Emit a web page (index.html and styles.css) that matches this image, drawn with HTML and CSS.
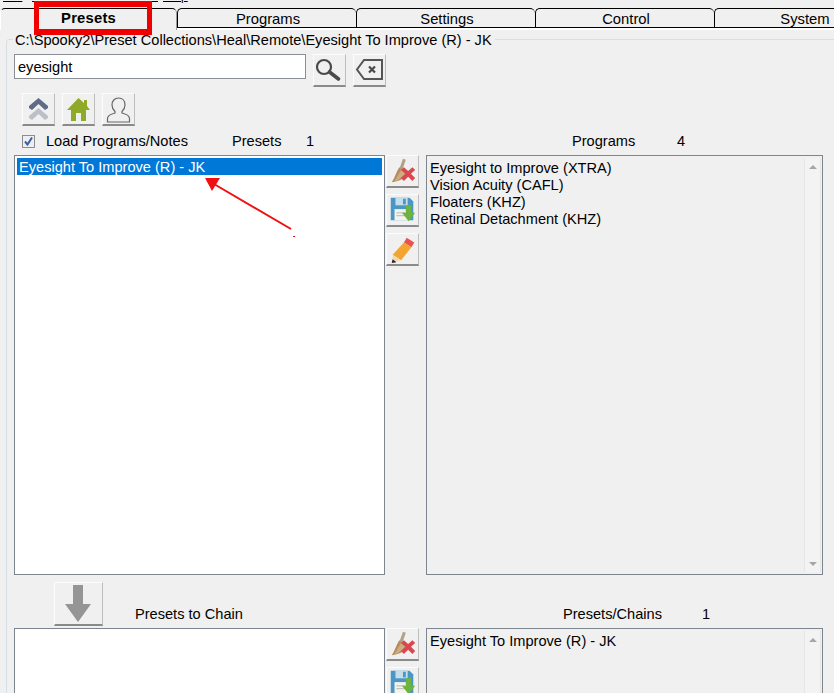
FILE: index.html
```html
<!DOCTYPE html>
<html lang="en">
<head>
  <meta charset="UTF-8" />
  <meta name="viewport" content="width=device-width, initial-scale=1.0" />
  <title>Spooky2 Presets</title>
  <link rel="stylesheet" href="styles.css">
</head>
<body>
  <svg class="defs" width="0" height="0">
    <symbol id="broom" viewBox="0 0 33 33">
      <path d="M17 3l3 1-4 12-3-2z" fill="#b3a087"/>
      <path d="M13 12l10 8c-4 4-10 7-18 8 3-4 5-11 8-16z" fill="#b58d5f"/>
      <path d="M15 15l5 4-9 7-3 1z" fill="#cdae82"/>
      <path d="M15 15l3-3 4.500 4 4.500-4 3 3-4.500 4 4.500 4.500-3 3-4.500-4.500-4.500 4.500-3-3 4.500-4.500z" fill="#d9484e"/>
    </symbol>
    <symbol id="floppy" viewBox="0 0 33 33">
      <path d="M4 3h20l4 4v20H4z" fill="#4a96c4"/>
      <path d="M9 3h13v8H9z" fill="#c4deeb"/>
      <path d="M17 4h3v6h-3z" fill="#4a96c4"/>
      <path d="M8 15h15v12H8z" fill="#f3f3ee"/>
      <path d="M10 19h9M10 22h9" stroke="#b5b5b0"/>
      <path d="M20 11h6v8h4l-7 9-7-9h4z" fill="#6db33f"/>
    </symbol>
    <symbol id="pencil" viewBox="0 0 33 33">
      <path d="M21 4l8 5-3 5-8-5z" fill="#e8534f"/>
      <path d="M18 9l8 5-11 14-9-6z" fill="#f2a531"/>
      <path d="M6 22l9 6-9 3z" fill="#f0d9b0"/>
      <path d="M6 27l4 3-5 1z" fill="#222"/>
    </symbol>
  </svg>

  <div class="app">
    <div class="menu">
      <span class="m1">File</span><span class="m2">Simulation</span><span class="m3">Mode</span><span class="m4">Tools</span><span class="m5">Help</span>
    </div>

    <div class="tabs">
      <div class="tab tab-active">Presets</div>
      <div class="tab">Programs</div>
      <div class="tab">Settings</div>
      <div class="tab">Control</div>
      <div class="tab">System</div>
    </div>

    <fieldset class="group">
      <legend>C:\Spooky2\Preset Collections\Heal\Remote\Eyesight To Improve (R) - JK</legend>

      <div class="search-row">
        <div class="search-box">eyesight</div>
        <button class="btn">
          <svg width="31" height="31" viewBox="0 0 31 31"><circle cx="10" cy="12" r="7" fill="none" stroke="#4a4a4a" stroke-width="2.200"/><path d="M15.500 17l9 7" stroke="#4a4a4a" stroke-width="3.600" stroke-linecap="round"/></svg>
        </button>
        <button class="btn">
          <svg width="31" height="31" viewBox="0 0 31 31"><path d="M3 14.500L10 5h18v19H10z" fill="none" stroke="#555" stroke-width="2"/><path d="M15 11.500l6 6M21 11.500l-6 6" stroke="#4a4a4a" stroke-width="2.200"/></svg>
        </button>
      </div>

      <div class="nav-row">
        <button class="btn">
          <svg width="31" height="31" viewBox="0 0 31 31"><path d="M6 12l9.500-8L25 12v2l-3 2-6.500-6L9 16l-3-2z" fill="#5f6c85"/><path d="M6 22l9.500-8L25 22v2l-3 2-6.500-6L9 26l-3-2z" fill="#bcbfc6"/></svg>
        </button>
        <button class="btn">
          <svg width="31" height="31" viewBox="0 0 31 31"><path d="M15.500 4L21 9V6h3v6l3 4h-4v11h-5v-8h-5v8H8V16H4z" fill="#8fa928"/></svg>
        </button>
        <button class="btn">
          <svg width="31" height="31" viewBox="0 0 31 31"><path d="M15.500 4c4 0 6.500 3 6.500 7 0 3-1.500 5-3 6.500v1.500c4 1 7.500 2.500 7.500 5.500V28H4.500v-3.500c0-3 3.500-4.500 7.500-5.500v-1.500c-1.500-1.500-3-3.500-3-6.500 0-4 2.500-7 6.500-7z" fill="none" stroke="#666" stroke-width="1.200"/></svg>
        </button>
      </div>

      <div class="main-grid">
        <div class="head-left">
          <span class="check"><svg width="11" height="11" viewBox="0 0 11 11"><path d="M2 5.500l2.500 3L9 1.500" fill="none" stroke="#3d5f9e" stroke-width="2"/></svg></span>
          <span class="load-label">Load Programs/Notes</span>
          <span class="presets-label">Presets</span>
          <span class="presets-count">1</span>
        </div>
        <div></div>
        <div class="head-right">
          <span class="programs-label">Programs</span>
          <span class="programs-count">4</span>
        </div>

        <div class="list list-white">
          <div class="row row-selected">Eyesight To Improve (R) - JK</div>
        </div>
        <div class="side-btns">
          <button class="btn"><svg width="31" height="31"><use href="#broom"/></svg></button>
          <button class="btn"><svg width="31" height="31"><use href="#floppy"/></svg></button>
          <button class="btn"><svg width="31" height="31"><use href="#pencil"/></svg></button>
        </div>
        <div class="list list-grey">
          <div class="rows">
            <div class="row">Eyesight to Improve (XTRA)</div>
            <div class="row">Vision Acuity (CAFL)</div>
            <div class="row">Floaters (KHZ)</div>
            <div class="row">Retinal Detachment (KHZ)</div>
          </div>
          <div class="scrollbar"><span class="arrow-up"></span><span class="arrow-down"></span></div>
        </div>
      </div>

      <div class="chain-grid">
        <div class="chain-head-left">
          <button class="btn btn-down">
            <svg width="47" height="41" viewBox="0 0 47 41"><path d="M18 2h10v19h8L23 39 10 21h8z" fill="#959595"/></svg>
          </button>
          <span class="chain-label">Presets to Chain</span>
        </div>
        <div></div>
        <div class="head-right chain-head-right">
          <span class="chains-label">Presets/Chains</span>
          <span class="chains-count">1</span>
        </div>

        <div class="list list-white list-bottom"></div>
        <div class="side-btns">
          <button class="btn"><svg width="31" height="31"><use href="#broom"/></svg></button>
          <button class="btn"><svg width="31" height="31"><use href="#floppy"/></svg></button>
        </div>
        <div class="list list-grey list-bottom">
          <div class="rows">
            <div class="row">Eyesight To Improve (R) - JK</div>
          </div>
          <div class="scrollbar"><span class="arrow-up"></span></div>
        </div>
      </div>
    </fieldset>

    <!-- annotations on top of the screenshot -->
    <div class="red-box"></div>
    <svg class="red-arrow" width="834" height="693" viewBox="0 0 834 693">
      <path d="M291 229L214 184" stroke="#f01010" stroke-width="2"/>
      <path d="M205 178h15l-8 13z" fill="#f01010"/>
      <rect x="293" y="236" width="2" height="1" fill="#f01010"/>
    </svg>
  </div>
</body>
</html>
```
FILE: styles.css
```css
* {
  box-sizing: border-box;
}
html, body {
  margin: 0;
  padding: 0;
}
body {
  font-family: "Liberation Sans", Arial, sans-serif;
  font-size: 14.6px;
  color: #000;
  background: #f0f0f0;
  overflow: hidden;
}
.defs {
  display: block;
}
.app {
  position: relative;
  width: 834px;
  height: 693px;
  overflow: hidden;
}

/* menu is cut off by the top of the crop */
.menu {
  display: flex;
  height: 8px;
  overflow: hidden;
  font-size: 12px;
}
.menu span {
  display: block;
  height: 14px;
  margin-top: -11px;
  line-height: 14px;
  text-decoration: underline;
}
.m1 { margin-left: 3px; width: 29px; }
.m2 { width: 58px; }
.m3 { width: 40px; }
.m4 { width: 33px; }

.tabs {
  display: flex;
  width: 900px;
  height: 22px;
  border-bottom: 2px solid #fff;
}
.tab {
  width: 179px;
  height: 20px;
  padding-left: 2px;
  line-height: 20px;
  font-size: 14.8px;
  text-align: center;
  background: #f0f0f0;
  border-top: 1px solid #000;
  border-bottom: 1px solid #000;
  border-left: 1px solid #000;
  border-top-left-radius: 5px;
  border-top-right-radius: 5px;
}
.tab-active {
  width: 177px;
  height: 22px;
  padding-left: 0;
  line-height: 18px;
  font-weight: bold;
  letter-spacing: .2px;
  border: 0;
  border-top: 1px solid #000;
  border-left: 1px solid #fff;
  border-right: 1px solid #999;
}

.group {
  margin: 1px 0 0 6px;
  padding: 0 0 0 7px;
  width: 840px;
  height: 700px;
  border: 1px solid #d5dfe5;
  border-radius: 3px;
  min-width: 0;
}
.group legend {
  margin-left: -1px;
  padding: 0 3px 0 2px;
  height: 17px;
  line-height: 19px;
}

.btn {
  display: flex;
  align-items: center;
  justify-content: center;
  width: 33px;
  height: 33px;
  padding: 0;
  background: #f0f0f0;
  border: 1px solid #fcfcfc;
  border-right-color: #bdbdbd;
  border-bottom: 2px solid #8a8a8a;
  flex: none;
}
.btn svg {
  display: block;
}

.search-row {
  display: flex;
  margin-top: 6px;
  height: 33px;
}
.search-box {
  width: 292px;
  height: 25px;
  padding-left: 3px;
  line-height: 25px;
  background: #fff;
  border: 1px solid #8a8f96;
  margin-right: 7px;
}
.search-row .btn + .btn {
  margin-left: 7px;
}

.nav-row {
  display: flex;
  gap: 7px;
  margin: 6px 0 0 8px;
  height: 34px;
}

.main-grid, .chain-grid {
  display: grid;
  grid-template-columns: 371px 34px 398px;
}
.main-grid {
  margin-top: 2px;
  grid-template-rows: 26px 420px;
}
.chain-grid {
  margin-top: 7px;
  grid-template-rows: 46px 100px;
}

.head-left, .head-right {
  display: flex;
  align-items: center;
  height: 24px;
}
.check {
  display: flex;
  align-items: center;
  justify-content: center;
  width: 13px;
  height: 13px;
  margin-left: 8px;
  background: #eceef3;
  border: 1px solid #8d8d8d;
}
.load-label { margin-left: 11px; width: 186px; }
.presets-label { width: 74px; }
.head-right { margin-left: 7px; }
.programs-label { margin-left: 146px; width: 105px; }

.list {
  border: 1px solid #7d858e;
}
.list-white {
  background: #fff;
  padding: 2px;
}
.list-grey {
  display: flex;
  margin-left: 7px;
  background: #f0f0f0;
  width: 397px;
}
.rows {
  flex: 1;
  padding: 4px 0 0 3px;
}
.row {
  height: 17px;
  line-height: 17px;
}
.row-selected {
  background: #0078d7;
  color: #fff;
  padding-left: 2px;
  line-height: 19px;
}
.scrollbar {
  position: relative;
  width: 17px;
  margin: 2px 1px 2px 0;
  background: #f3f3f3;
  border-left: 1px solid #e6e6e6;
  border-right: 1px solid #e6e6e6;
}
.arrow-up, .arrow-down {
  position: absolute;
  left: 4px;
  width: 0;
  height: 0;
  border-left: 4px solid transparent;
  border-right: 4px solid transparent;
}
.arrow-up {
  top: 7px;
  border-bottom: 4px solid #a6a6a6;
}
.arrow-down {
  bottom: 6px;
  border-top: 4px solid #a6a6a6;
}

.side-btns {
  display: flex;
  flex-direction: column;
  gap: 6px;
  margin-left: 1px;
}

.chain-head-left {
  display: flex;
  align-items: flex-end;
}
.btn-down {
  width: 49px;
  height: 44px;
  margin-left: 40px;
  align-self: flex-start;
}
.chain-label {
  margin-left: 32px;
  padding-bottom: 4px;
  line-height: 20px;
}
.chain-head-right {
  height: 46px;
  align-items: flex-end;
}
.chain-head-right span {
  padding-bottom: 4px;
  line-height: 20px;
}
.chains-label { margin-left: 137px; width: 139px; }
.list-bottom {
  height: 100px;
}

/* annotations */
.red-box {
  position: absolute;
  left: 34px;
  top: 1px;
  width: 118px;
  height: 34px;
  border-style: solid;
  border-color: #f00000;
  border-width: 6px 5px;
}
.red-arrow {
  position: absolute;
  left: 0;
  top: 0;
}
```
